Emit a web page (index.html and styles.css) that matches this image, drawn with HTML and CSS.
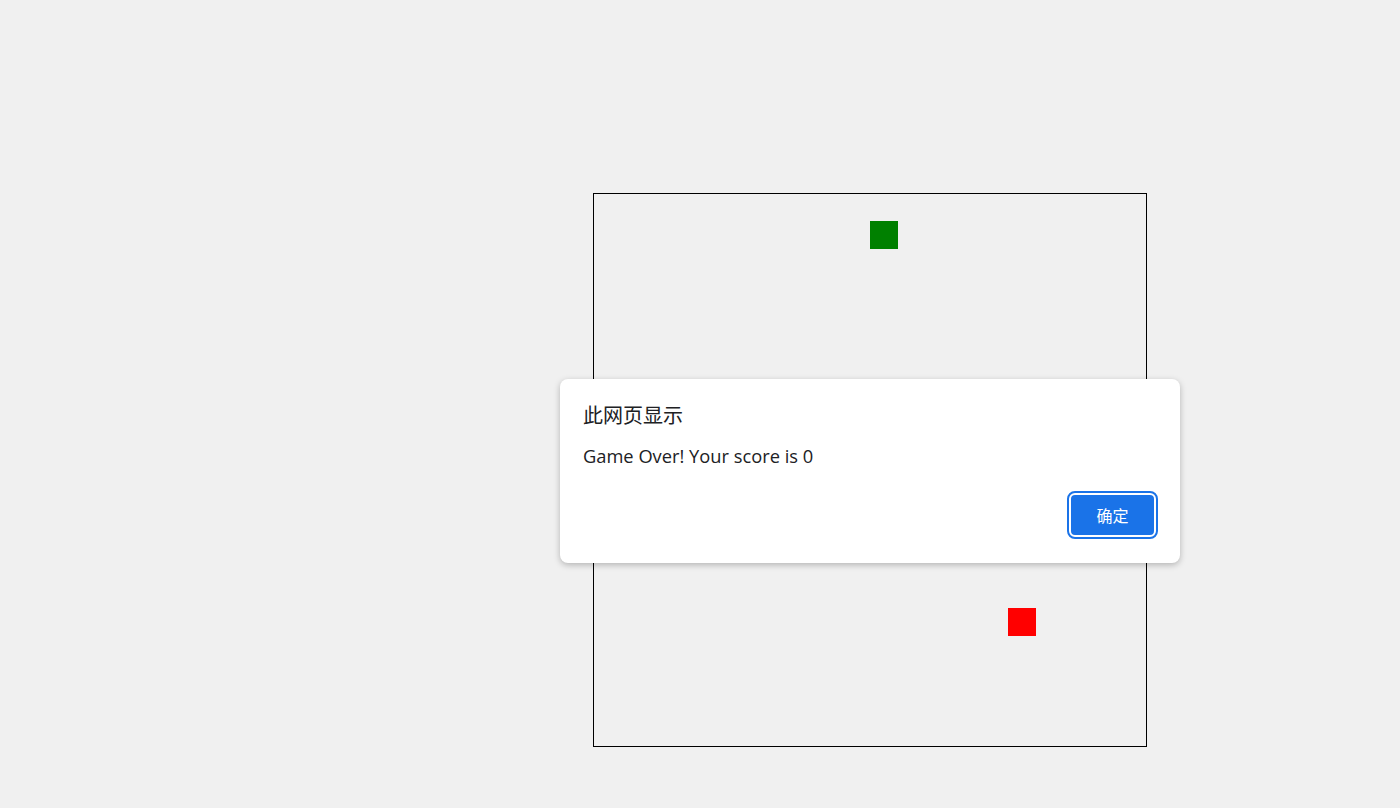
FILE: index.html
```html
<!DOCTYPE html>
<html lang="zh-CN">
<head>
  <meta charset="UTF-8" />
  <title>Snake</title>
  <link rel="stylesheet" href="styles.css">
</head>
<body>

<div class="stage">
  <div class="board">
    <div class="cell food"></div>
    <div class="cell snake"></div>
  </div>
</div>

<div class="dialog">
  <div class="dialog-title">此网页显示</div>
  <div class="dialog-msg">Game Over! Your score is 0</div>
  <div class="dialog-actions">
    <button class="ok">确定</button>
  </div>
</div>

</body>
</html>
```

FILE: styles.css
```css
body { margin: 0; background: #f0f0f0; font-family: "Open Sans", "Noto Sans CJK SC", sans-serif; }
.stage { padding: 193px 0 0 593px; }
.board { position: relative; width: 552px; height: 552px; border: 1px solid #000; }
.cell { position: absolute; width: 28px; height: 28px; }
.food { left: 276px; top: 27px; background: #008000; }
.snake { left: 414px; top: 414px; background: #ff0000; }

.dialog {
  position: absolute; left: 560px; top: 379px; width: 620px; box-sizing: border-box;
  padding: 21px 24px 26px 23px; background: #fff; border-radius: 8px;
  box-shadow: 0 2px 6px rgba(0,0,0,0.25);
}
.dialog-title { font-size: 20px; line-height: 30px; color: #202124; font-family: "Noto Sans CJK SC", sans-serif; }
.dialog-msg { margin-top: 14px; font-size: 18.3px; line-height: 24px; color: #202124; }
.dialog-actions { display: flex; justify-content: flex-end; margin-top: 25px; }
.ok {
  width: 87px; height: 44px; border: 2px solid #fff; border-radius: 6px;
  outline: 2px solid #1a73e8; background: #1a73e8; color: #fff;
  font-family: "Noto Sans CJK SC", sans-serif; font-size: 16px; cursor: pointer;
}
```
